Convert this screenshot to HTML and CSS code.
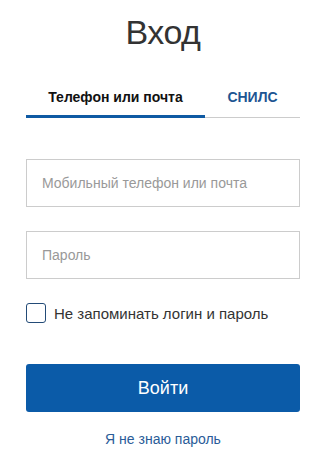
FILE: index.html
```html
<!DOCTYPE html>
<html lang="ru">
<head>
    <meta charset="UTF-8">
    <meta name="viewport" content="width=device-width, initial-scale=1.0">
    <title>Вход</title>
    <link rel="stylesheet" href="styles.css">
</head>
<body>

<div class="login">
    <h1 class="title">Вход</h1>

    <!-- Tabs -->
    <div class="tabs">
        <div class="tab active">Телефон или почта</div>
        <div class="tab">СНИЛС</div>
    </div>

    <form class="form">
        <input class="field" type="text" placeholder="Мобильный телефон или почта">
        <input class="field" type="password" placeholder="Пароль">

        <label class="remember">
            <span class="check"></span>
            Не запоминать логин и пароль
        </label>

        <button class="submit" type="button">Войти</button>
    </form>

    <a class="forgot" href="#">Я не знаю пароль</a>
</div>

</body>
</html>
```

FILE: styles.css
```css
body {
    margin: 0;
    background: #fff;
    font-family: "Liberation Sans", Arial, sans-serif;
}

/* Container */
.login {
    width: 274px;
    margin: 0 0 0 26px;
    padding-top: 11px;
}

.title {
    margin: 0;
    text-align: center;
    font-size: 34px;
    font-weight: normal;
    line-height: 42px;
    letter-spacing: -0.5px;
    color: #333;
}

/* Tabs */
.tabs {
    display: flex;
    margin-top: 36px;
    border-bottom: 1px solid #ccc;
}

.tab {
    padding: 0 0 12px;
    font-size: 14px;
    font-weight: bold;
    line-height: 16px;
    text-align: center;
    color: #1d5592;
}

.tab:first-child {
    width: 179px;
}

.tab:last-child {
    flex: 1;
}

.tab.active {
    color: #111;
    box-shadow: inset 0 -3px 0 #0f5aa3;
    margin-bottom: -1px;
    padding-bottom: 13px;
}

/* Form */
.form {
    display: flex;
    flex-direction: column;
    margin-top: 41px;
}

.field {
    height: 48px;
    box-sizing: border-box;
    margin: 0 0 24px;
    padding: 0 15px;
    border: 1px solid #ccc;
    font-family: inherit;
    font-size: 14px;
    color: #333;
    outline: none;
}

.field::placeholder {
    color: #999;
}

.remember {
    display: flex;
    align-items: center;
    font-size: 15px;
    color: #333;
    cursor: pointer;
}

.check {
    width: 20px;
    height: 20px;
    box-sizing: border-box;
    margin-right: 8px;
    border: 1px solid #234b77;
    border-radius: 3px;
}

.submit {
    height: 48px;
    margin-top: 41px;
    border: none;
    border-radius: 3px;
    background-color: #0b5ba8;
    color: #fff;
    font-family: inherit;
    font-size: 18px;
    cursor: pointer;
}

.forgot {
    display: block;
    margin-top: 19px;
    text-align: center;
    font-size: 14px;
    color: #2a5c98;
    text-decoration: none;
}
```
